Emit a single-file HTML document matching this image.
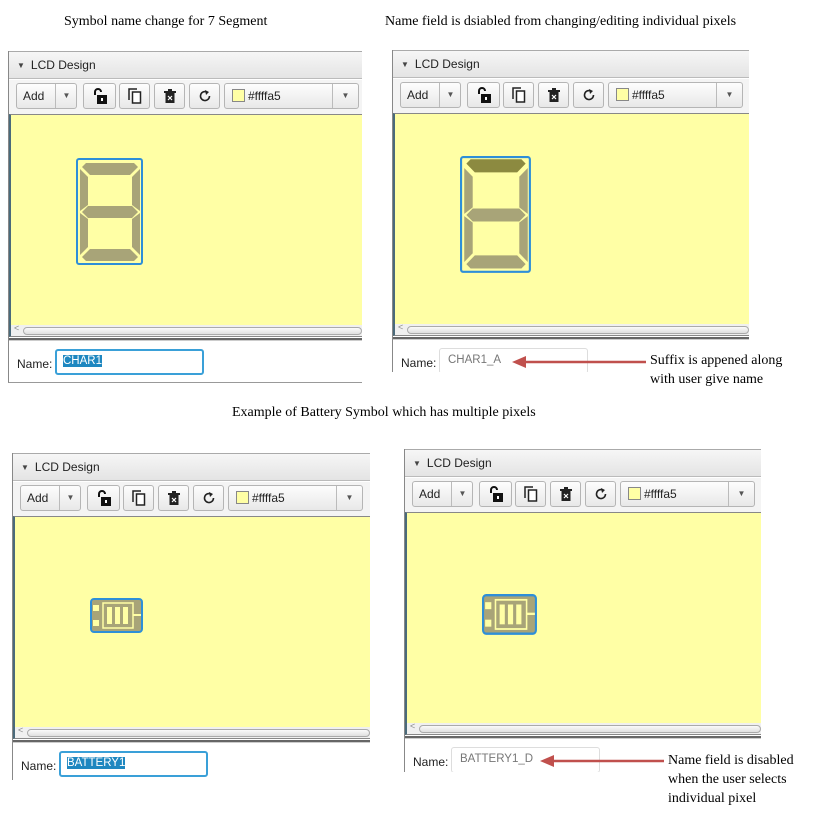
<!DOCTYPE html>
<html><head><meta charset="utf-8"><style>
*{box-sizing:border-box;margin:0;padding:0}
body{width:816px;height:820px;background:#fff;position:relative;overflow:hidden;font-family:"Liberation Sans",sans-serif}
.cap{position:absolute;font-family:"Liberation Serif",serif;font-size:14px;color:#000;white-space:nowrap}
.p{position:absolute;overflow:hidden;border-left:1px solid #888}
.hd{position:absolute;left:0;right:0;top:0;height:28px;background:linear-gradient(#f6f6f6,#e4e4e4);border-top:1px solid #aaa;border-bottom:1px solid #bbb;font-size:12px;color:#222;line-height:27px;padding-left:8px}
.hd span{font-size:8px;color:#444;margin-right:6px;vertical-align:1px}
.tb{position:absolute;left:0;right:0;top:29px;height:34px;background:#f4f4f4}
.b{position:absolute;top:3px;height:26px;border:1px solid #b5b5b5;border-radius:3px;background:linear-gradient(#fdfdfd,#e8e8e8);font-size:12px;color:#222;line-height:24px;text-align:center}
.b svg{position:absolute;left:50%;top:50%;transform:translate(-50%,-50%)}
.cv{position:absolute;left:0;right:0;top:63px;height:211px;background:#ffffa5;border-left:2px solid #4a6a7a;border-top:1px solid #888}
.sc{position:absolute;left:0;right:0;top:274px;height:12px;background:#f0f0f0;border-left:2px solid #4a6a7a;border-bottom:1px solid #888}
.sc i{position:absolute;left:12px;right:0;top:2px;height:8px;border:1px solid #aaa;border-radius:4px;background:linear-gradient(#fafafa,#e0e0e0)}
.sc b{position:absolute;left:3px;top:-2px;font-size:9px;color:#888;font-weight:normal}
.ln{position:absolute;left:0;right:0;top:287px;height:3px;background:#666;border-bottom:1px solid #ccc}
.nm{position:absolute;left:8px;top:306px;font-size:12px;color:#222}
.in{position:absolute;left:46px;top:298px;width:149px;height:26px;border:2px solid #3aa0d8;border-radius:3px;background:#fff;font-size:11.5px;padding:4px 6px}
.in span{background:#1e87c0;color:#fff}
.dis{border:1px solid #ddd;color:#777;padding:5px 8px}
</style></head><body>

<div class="cap" style="left:64px;top:14px">Symbol name change for 7 Segment</div>
<div class="cap" style="left:385px;top:14px">Name field is dsiabled from changing/editing individual pixels</div>
<div class="cap" style="left:232px;top:405px">Example of Battery Symbol which has multiple pixels</div>
<div class="cap" style="left:650px;top:351px;line-height:19px">Suffix is appened along<br>with user give name</div>
<div class="cap" style="left:668px;top:751px;line-height:19px">Name field is disabled<br>when the user selects<br>individual pixel</div>

<div class="p" style="left:8px;top:51px;width:354px;height:332px;border-bottom:1px solid #999">
 <div class="hd"><span>▼</span>LCD Design</div>
 <div class="tb">
  <div class="b" style="left:7px;width:61px;text-align:left;padding-left:6px">Add<span style="position:absolute;left:38px;top:0;height:24px;border-left:1px solid #bbb;width:22px;text-align:center;font-size:8px;color:#555">▼</span></div>
  <div class="b" style="left:74px;width:33px"><svg width="14" height="16" viewBox="0 0 14 16"><path d="M2 7V4a3 3 0 0 1 6 0" fill="none" stroke="#111" stroke-width="2"/><rect x="4" y="7" width="10" height="9" fill="#111"/><rect x="8" y="10" width="2" height="3" fill="#fff"/></svg></div>
  <div class="b" style="left:110px;width:31px"><svg width="14" height="16" viewBox="0 0 14 16"><path d="M1 12V1h8" fill="none" stroke="#222" stroke-width="1.5"/><rect x="4.5" y="4" width="8" height="11" fill="#fff" stroke="#222" stroke-width="1.5"/></svg></div>
  <div class="b" style="left:145px;width:31px"><svg width="12" height="14" viewBox="0 0 12 14"><rect x="4" y="0" width="4" height="2" fill="#222"/><rect x="0" y="2" width="12" height="2" fill="#222"/><rect x="1.5" y="4" width="9" height="10" fill="#222"/><path d="M4 7l4 4M8 7l-4 4" stroke="#fff" stroke-width="1.2"/></svg></div>
  <div class="b" style="left:180px;width:31px"><svg width="14" height="14" viewBox="0 0 14 14"><path d="M11.5 7A4.5 4.5 0 1 1 9 3" fill="none" stroke="#222" stroke-width="1.6"/><path d="M7 1l4 2-3 3z" fill="#222"/></svg></div>
  <div class="b" style="left:215px;width:135px;text-align:left;padding-left:7px"><span style="display:inline-block;width:13px;height:13px;background:#ffffa5;border:1px solid #888;vertical-align:-2px;margin-right:3px"></span>#ffffa5<span style="position:absolute;right:0;top:0;width:26px;height:24px;border-left:1px solid #bbb;font-size:8px;color:#555;text-align:center">▼</span></div>
 </div>
 <div class="cv">
  <svg style="position:absolute;left:65px;top:43px" width="68" height="108" viewBox="0 0 68 108">
   <rect x="1" y="1" width="65" height="105" rx="2" fill="none" stroke="#2e8fd8" stroke-width="2"/>
   <g fill="#a8a478"><polygon points="10,5 58,5 62,9 54,17 14,17 6,9"/><polygon points="4,11 12,19 12,47 4,53"/><polygon points="64,11 56,19 56,47 64,53"/><polygon points="12,48 56,48 62,54 56,60 12,60 6,54"/><polygon points="4,55 12,61 12,89 4,97"/><polygon points="64,55 56,61 56,89 64,97"/><polygon points="14,91 54,91 62,99 58,103 10,103 6,99"/></g>
  </svg>
 </div>
 <div class="sc"><b>&lt;</b><i></i></div>
 <div class="ln"></div>
 <div class="nm">Name:</div>
 <div class="in"><span>CHAR1</span></div>
</div>

<div class="p" style="left:392px;top:50px;width:357px;height:322px">
 <div class="hd"><span>▼</span>LCD Design</div>
 <div class="tb">
  <div class="b" style="left:7px;width:61px;text-align:left;padding-left:6px">Add<span style="position:absolute;left:38px;top:0;height:24px;border-left:1px solid #bbb;width:22px;text-align:center;font-size:8px;color:#555">▼</span></div>
  <div class="b" style="left:74px;width:33px"><svg width="14" height="16" viewBox="0 0 14 16"><path d="M2 7V4a3 3 0 0 1 6 0" fill="none" stroke="#111" stroke-width="2"/><rect x="4" y="7" width="10" height="9" fill="#111"/><rect x="8" y="10" width="2" height="3" fill="#fff"/></svg></div>
  <div class="b" style="left:110px;width:31px"><svg width="14" height="16" viewBox="0 0 14 16"><path d="M1 12V1h8" fill="none" stroke="#222" stroke-width="1.5"/><rect x="4.5" y="4" width="8" height="11" fill="#fff" stroke="#222" stroke-width="1.5"/></svg></div>
  <div class="b" style="left:145px;width:31px"><svg width="12" height="14" viewBox="0 0 12 14"><rect x="4" y="0" width="4" height="2" fill="#222"/><rect x="0" y="2" width="12" height="2" fill="#222"/><rect x="1.5" y="4" width="9" height="10" fill="#222"/><path d="M4 7l4 4M8 7l-4 4" stroke="#fff" stroke-width="1.2"/></svg></div>
  <div class="b" style="left:180px;width:31px"><svg width="14" height="14" viewBox="0 0 14 14"><path d="M11.5 7A4.5 4.5 0 1 1 9 3" fill="none" stroke="#222" stroke-width="1.6"/><path d="M7 1l4 2-3 3z" fill="#222"/></svg></div>
  <div class="b" style="left:215px;width:135px;text-align:left;padding-left:7px"><span style="display:inline-block;width:13px;height:13px;background:#ffffa5;border:1px solid #888;vertical-align:-2px;margin-right:3px"></span>#ffffa5<span style="position:absolute;right:0;top:0;width:26px;height:24px;border-left:1px solid #bbb;font-size:8px;color:#555;text-align:center">▼</span></div>
 </div>
 <div class="cv">
  <svg style="position:absolute;left:65px;top:42px" width="72" height="118" viewBox="0 0 68 108" preserveAspectRatio="none">
   <rect x="1" y="1" width="65" height="105" rx="2" fill="none" stroke="#2e8fd8" stroke-width="2"/>
   <g fill="#a8a478"><polygon points="4,11 12,19 12,47 4,53"/><polygon points="64,11 56,19 56,47 64,53"/><polygon points="12,48 56,48 62,54 56,60 12,60 6,54"/><polygon points="4,55 12,61 12,89 4,97"/><polygon points="64,55 56,61 56,89 64,97"/><polygon points="14,91 54,91 62,99 58,103 10,103 6,99"/></g>
   <polygon points="10,3 58,3 62,7 54,15 14,15 6,7" fill="#8c8a40"/>
  </svg>
 </div>
 <div class="sc"><b>&lt;</b><i></i></div>
 <div class="ln"></div>
 <div class="nm">Name:</div>
 <div class="in dis">CHAR1_A</div>
</div>

<div class="p" style="left:12px;top:453px;width:358px;height:327px">
 <div class="hd"><span>▼</span>LCD Design</div>
 <div class="tb">
  <div class="b" style="left:7px;width:61px;text-align:left;padding-left:6px">Add<span style="position:absolute;left:38px;top:0;height:24px;border-left:1px solid #bbb;width:22px;text-align:center;font-size:8px;color:#555">▼</span></div>
  <div class="b" style="left:74px;width:33px"><svg width="14" height="16" viewBox="0 0 14 16"><path d="M2 7V4a3 3 0 0 1 6 0" fill="none" stroke="#111" stroke-width="2"/><rect x="4" y="7" width="10" height="9" fill="#111"/><rect x="8" y="10" width="2" height="3" fill="#fff"/></svg></div>
  <div class="b" style="left:110px;width:31px"><svg width="14" height="16" viewBox="0 0 14 16"><path d="M1 12V1h8" fill="none" stroke="#222" stroke-width="1.5"/><rect x="4.5" y="4" width="8" height="11" fill="#fff" stroke="#222" stroke-width="1.5"/></svg></div>
  <div class="b" style="left:145px;width:31px"><svg width="12" height="14" viewBox="0 0 12 14"><rect x="4" y="0" width="4" height="2" fill="#222"/><rect x="0" y="2" width="12" height="2" fill="#222"/><rect x="1.5" y="4" width="9" height="10" fill="#222"/><path d="M4 7l4 4M8 7l-4 4" stroke="#fff" stroke-width="1.2"/></svg></div>
  <div class="b" style="left:180px;width:31px"><svg width="14" height="14" viewBox="0 0 14 14"><path d="M11.5 7A4.5 4.5 0 1 1 9 3" fill="none" stroke="#222" stroke-width="1.6"/><path d="M7 1l4 2-3 3z" fill="#222"/></svg></div>
  <div class="b" style="left:215px;width:135px;text-align:left;padding-left:7px"><span style="display:inline-block;width:13px;height:13px;background:#ffffa5;border:1px solid #888;vertical-align:-2px;margin-right:3px"></span>#ffffa5<span style="position:absolute;right:0;top:0;width:26px;height:24px;border-left:1px solid #bbb;font-size:8px;color:#555;text-align:center">▼</span></div>
 </div>
 <div class="cv">
  <svg style="position:absolute;left:75px;top:81px" width="54" height="36" viewBox="0 0 54 36">
   <rect x="1" y="1" width="51" height="33" rx="3" fill="#a8a478" stroke="#2e8fd8" stroke-width="2"/>
   <rect x="3" y="7" width="6" height="6" fill="#ffffa5"/><rect x="3" y="22" width="6" height="6" fill="#ffffa5"/>
   <rect x="13" y="5" width="30" height="25" fill="none" stroke="#ffffa5" stroke-width="1.5"/>
   <rect x="17" y="9" width="5" height="17" fill="#ffffa5"/><rect x="25" y="9" width="5" height="17" fill="#ffffa5"/><rect x="33" y="9" width="5" height="17" fill="#ffffa5"/>
   <rect x="43" y="16" width="8" height="2" fill="#ffffa5"/>
  </svg>
 </div>
 <div class="sc"><b>&lt;</b><i></i></div>
 <div class="ln"></div>
 <div class="nm">Name:</div>
 <div class="in"><span>BATTERY1</span></div>
</div>

<div class="p" style="left:404px;top:449px;width:357px;height:323px">
 <div class="hd"><span>▼</span>LCD Design</div>
 <div class="tb">
  <div class="b" style="left:7px;width:61px;text-align:left;padding-left:6px">Add<span style="position:absolute;left:38px;top:0;height:24px;border-left:1px solid #bbb;width:22px;text-align:center;font-size:8px;color:#555">▼</span></div>
  <div class="b" style="left:74px;width:33px"><svg width="14" height="16" viewBox="0 0 14 16"><path d="M2 7V4a3 3 0 0 1 6 0" fill="none" stroke="#111" stroke-width="2"/><rect x="4" y="7" width="10" height="9" fill="#111"/><rect x="8" y="10" width="2" height="3" fill="#fff"/></svg></div>
  <div class="b" style="left:110px;width:31px"><svg width="14" height="16" viewBox="0 0 14 16"><path d="M1 12V1h8" fill="none" stroke="#222" stroke-width="1.5"/><rect x="4.5" y="4" width="8" height="11" fill="#fff" stroke="#222" stroke-width="1.5"/></svg></div>
  <div class="b" style="left:145px;width:31px"><svg width="12" height="14" viewBox="0 0 12 14"><rect x="4" y="0" width="4" height="2" fill="#222"/><rect x="0" y="2" width="12" height="2" fill="#222"/><rect x="1.5" y="4" width="9" height="10" fill="#222"/><path d="M4 7l4 4M8 7l-4 4" stroke="#fff" stroke-width="1.2"/></svg></div>
  <div class="b" style="left:180px;width:31px"><svg width="14" height="14" viewBox="0 0 14 14"><path d="M11.5 7A4.5 4.5 0 1 1 9 3" fill="none" stroke="#222" stroke-width="1.6"/><path d="M7 1l4 2-3 3z" fill="#222"/></svg></div>
  <div class="b" style="left:215px;width:135px;text-align:left;padding-left:7px"><span style="display:inline-block;width:13px;height:13px;background:#ffffa5;border:1px solid #888;vertical-align:-2px;margin-right:3px"></span>#ffffa5<span style="position:absolute;right:0;top:0;width:26px;height:24px;border-left:1px solid #bbb;font-size:8px;color:#555;text-align:center">▼</span></div>
 </div>
 <div class="cv">
  <svg style="position:absolute;left:75px;top:81px" width="56" height="42" viewBox="0 0 54 36" preserveAspectRatio="none">
   <rect x="1" y="1" width="51" height="33" rx="3" fill="#a8a478" stroke="#2e8fd8" stroke-width="2"/>
   <rect x="3" y="7" width="6" height="6" fill="#ffffa5"/><rect x="3" y="22" width="6" height="6" fill="#ffffa5"/>
   <rect x="13" y="5" width="30" height="25" fill="none" stroke="#ffffa5" stroke-width="1.5"/>
   <rect x="17" y="9" width="5" height="17" fill="#ffffa5"/><rect x="25" y="9" width="5" height="17" fill="#ffffa5"/><rect x="33" y="9" width="5" height="17" fill="#ffffa5"/>
   <rect x="43" y="16" width="8" height="2" fill="#ffffa5"/>
  </svg>
 </div>
 <div class="sc"><b>&lt;</b><i></i></div>
 <div class="ln"></div>
 <div class="nm">Name:</div>
 <div class="in dis">BATTERY1_D</div>
</div>

<svg style="position:absolute;left:0;top:0;z-index:5" width="816" height="820">
<line x1="646" y1="362" x2="522" y2="362" stroke="#c0504d" stroke-width="2.5"/>
<polygon points="512,362 526,356 526,368" fill="#c0504d"/>
<line x1="664" y1="761" x2="550" y2="761" stroke="#c0504d" stroke-width="2.5"/>
<polygon points="540,761 554,755 554,767" fill="#c0504d"/>
</svg>

</body></html>
